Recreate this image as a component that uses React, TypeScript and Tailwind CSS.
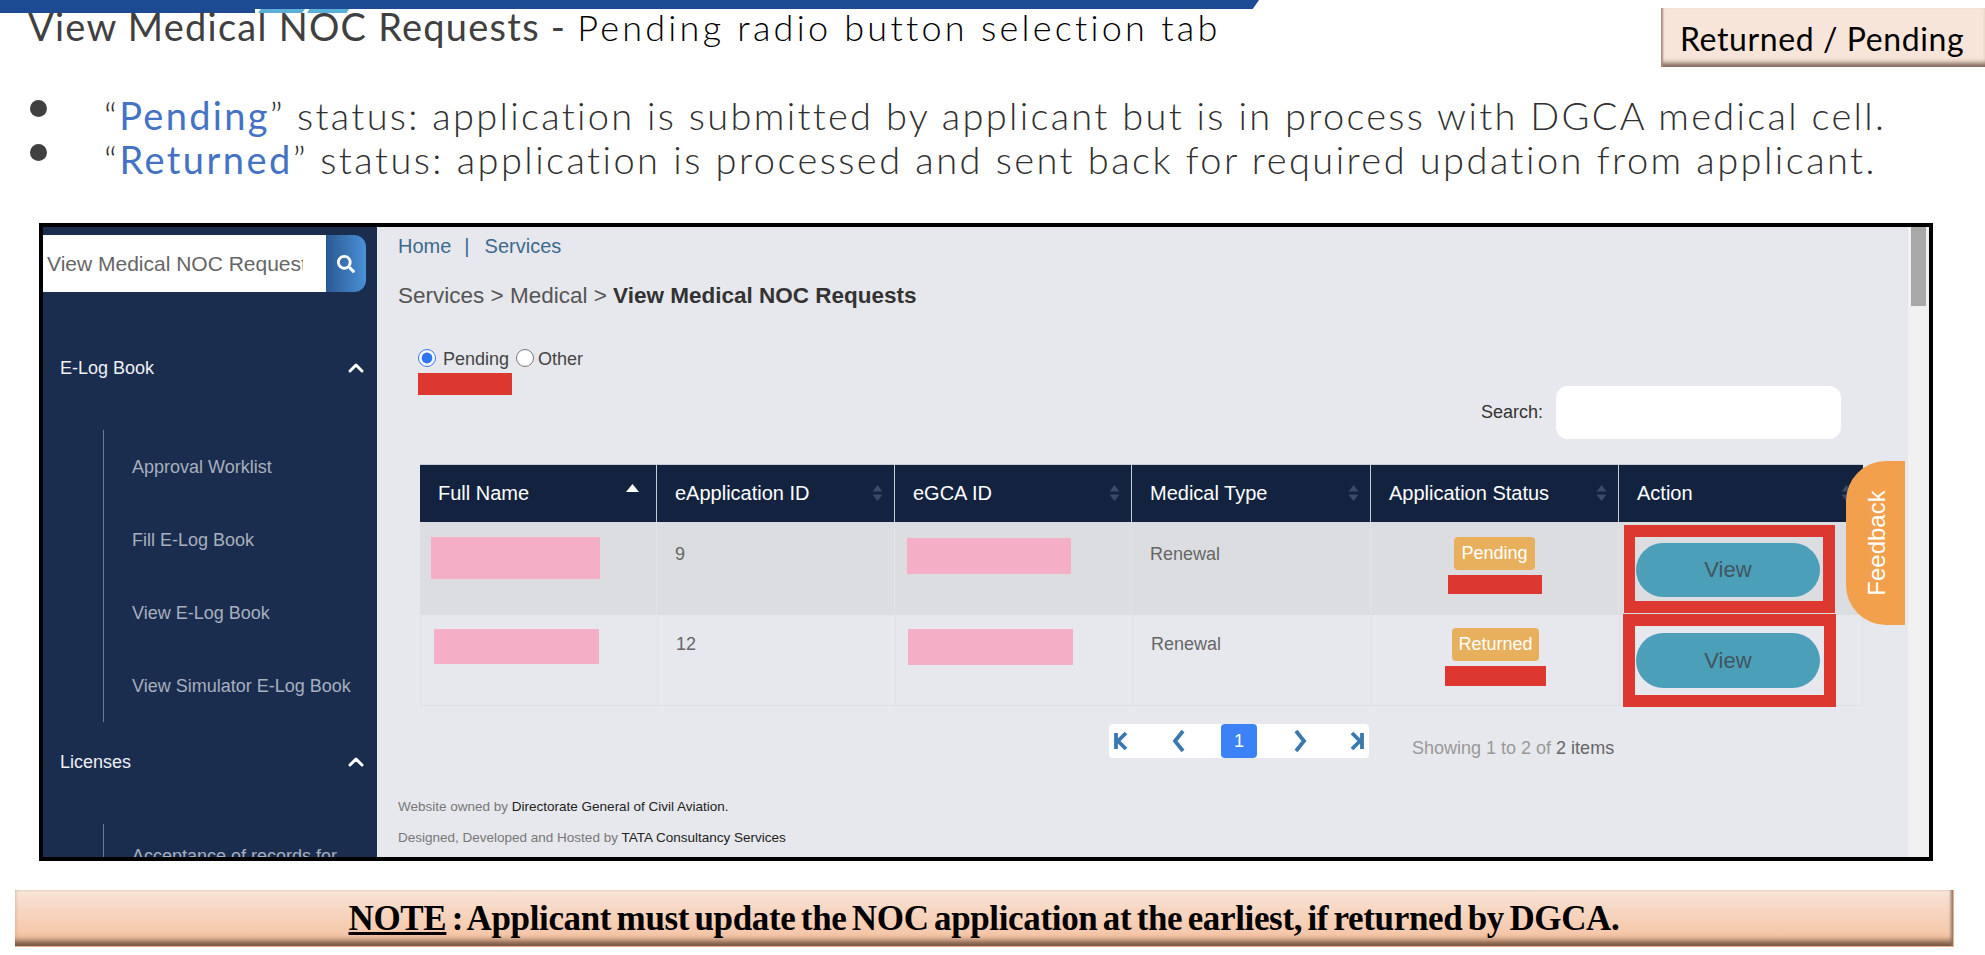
import { ChevronUp } from "lucide-react";
import { FaSearch } from "react-icons/fa";

const subItems = ["Approval Worklist", "Fill E-Log Book", "View E-Log Book", "View Simulator E-Log Book"];

function SortIcon() {
  return (
    <svg width="11" height="18" viewBox="0 0 11 18" className="shrink-0">
      <path d="M5.5 1 L10.5 7.5 H0.5 Z M5.5 17 L10.5 10.5 H0.5 Z" fill="#3b4a66" />
    </svg>
  );
}

function HeaderCell({ label, active, last }: { label: string; active?: boolean; last?: boolean }) {
  return (
    <div className={`flex items-center justify-between pl-[18px] pr-[11px] pb-[2px] text-[20px] text-white ${last ? "" : "border-r border-[#c8ccd4]"}`}>
      <span>{label}</span>
      {active ? (
        <svg width="13" height="8" viewBox="0 0 13 8" className="mb-[10px] mr-[6px]">
          <path d="M6.5 0 L13 8 H0 Z" fill="#ffffff" />
        </svg>
      ) : (
        <SortIcon />
      )}
    </div>
  );
}

function PageArrow({ d }: { d: string }) {
  return (
    <svg width="18" height="24" viewBox="0 0 18 24">
      <path d={d} fill="none" stroke="#3a78b0" strokeWidth="3.8" />
    </svg>
  );
}

export default function App() {
  return (
    <div className="flex h-[955px] w-[1985px] flex-col overflow-hidden bg-white font-['Liberation_Sans',Arial,sans-serif]">
      {/* slide top band */}
      <div className="h-[9px] w-[1259px] shrink-0 bg-[#1c4a93] [clip-path:polygon(0_0,100%_0,99.5%_100%,0_100%)]" />
      <div className="flex h-[4px] shrink-0">
        <div className="h-full w-[255px] bg-[#1c4a93]" />
        <div className="ml-[3px] h-full w-[47px] bg-[#5bb0d8] [clip-path:polygon(6%_0,100%_0,94%_100%,0_100%)]" />
        <div className="ml-[2px] h-full w-[42px] bg-[#5bb0d8] [clip-path:polygon(6%_0,100%_0,94%_100%,0_100%)]" />
      </div>

      {/* slide title */}
      <div className="-mt-[5px] flex h-[59px] shrink-0 items-start justify-between font-['Lato',sans-serif]">
        <div className="mt-[-7px] ml-[28px] leading-[50px] whitespace-nowrap">
          <span className="text-[38px] font-normal tracking-[1.25px] text-[#404040]">View Medical NOC Requests - </span>
          <span className="text-[36px] font-light tracking-[3.25px] text-black">Pending radio button selection tab</span>
        </div>
        <div className="ml-auto flex h-[59px] w-[324px] items-center bg-[#f7e5d9] pt-[3px] pl-[19px] text-[32px] font-normal tracking-[0.6px] whitespace-nowrap text-black shadow-[inset_3px_0_2px_-1px_#a89080,inset_0_-7px_5px_-3px_#7d6555]">
          Returned / Pending
        </div>
      </div>

      {/* bullets */}
      <div className="mt-[26px] flex shrink-0 flex-col font-['Lato',sans-serif] text-[38px] leading-[44px] font-light text-[#303030]">
        <div className="flex h-[44px] items-center tracking-[2.3px] whitespace-nowrap">
          <div className="ml-[30px] h-[17px] w-[17px] -translate-y-[7px] rounded-full bg-[#404040]" />
          <div className="ml-[57px]">
            “<span className="font-normal text-[#4472c4]">Pending</span>” status: application is submitted by applicant but is in process with DGCA medical cell.
          </div>
        </div>
        <div className="flex h-[44px] items-center tracking-[2.45px] whitespace-nowrap">
          <div className="ml-[30px] h-[17px] w-[17px] -translate-y-[7px] rounded-full bg-[#404040]" />
          <div className="ml-[57px]">
            “<span className="font-normal text-[#4472c4]">Returned</span>” status: application is processed and sent back for required updation from applicant.
          </div>
        </div>
      </div>

      {/* embedded screenshot */}
      <div className="mt-[42px] ml-[39px] flex h-[638px] w-[1894px] shrink-0 overflow-hidden border-4 border-black bg-[#e7e8ed]">
        {/* sidebar */}
        <aside className="h-full w-[334px] shrink-0 overflow-hidden bg-[#1a2d4f] pt-[8px]">
          <div className="flex h-[57px] w-[323px]">
            <input
              readOnly
              value="View Medical NOC Requests"
              className="h-full w-[283px] bg-white pr-[23px] pl-[4px] text-[21px] text-[#666] outline-none"
            />
            <div className="flex h-full w-[40px] items-center justify-center rounded-r-[12px] bg-gradient-to-r from-[#2a5a92] to-[#4a90d6]">
              <FaSearch className="text-[18px] text-white" />
            </div>
          </div>

          <div className="mt-[61px] flex h-[30px] items-center justify-between pr-[9px] pl-[17px] text-[18px] text-[#eef0f4]">
            <span>E-Log Book</span>
            <ChevronUp size={24} strokeWidth={3} className="text-white" />
          </div>
          <div className="mt-[47px] ml-[60px] flex flex-col gap-[43px] border-l border-[#6a7a94] pt-[22px] pb-[21px] pl-[28px] text-[18px] leading-[30px] text-[#a8afbd]">
            {subItems.map((item) => (
              <div key={item}>{item}</div>
            ))}
          </div>

          <div className="mt-[25px] flex h-[30px] items-center justify-between pr-[9px] pl-[17px] text-[18px] text-[#eef0f4]">
            <span>Licenses</span>
            <ChevronUp size={24} strokeWidth={3} className="text-white" />
          </div>
          <div className="mt-[47px] ml-[60px] h-[60px] border-l border-[#6a7a94] pt-[17px] pl-[28px] text-[18px] leading-[30px] text-[#a8afbd]">
            Acceptance of records for
          </div>
        </aside>

        {/* main */}
        <main className="relative h-full w-[1531px] shrink-0 pl-[21px]">
          <div className="flex h-[38px] items-center text-[20px] text-[#3c6a8c]">
            <span>Home</span>
            <span className="ml-[13px]">|</span>
            <span className="ml-[15px]">Services</span>
          </div>
          <div className="mt-[16px] h-[30px] text-[22.5px] leading-[30px] text-[#555]">
            Services &gt; Medical &gt; <span className="font-bold text-[#333]">View Medical NOC Requests</span>
          </div>

          <div className="mt-[35px] ml-[20px] flex h-[24px] items-center text-[18px] text-[#444]">
            <input type="radio" readOnly checked className="h-[18px] w-[18px] accent-[#2f74f0]" />
            <span className="ml-[7px] pt-[3px]">Pending</span>
            <input type="radio" readOnly checked={false} className="ml-[7px] h-[18px] w-[18px]" />
            <span className="ml-[4px] pt-[3px]">Other</span>
          </div>
          <div className="mt-[3px] ml-[20px] h-[22px] w-[94px] bg-[#dc3830]" />

          <div className="-mt-[9px] flex h-[53px] items-center">
            <span className="ml-[1083px] text-[18px] text-[#333]">Search:</span>
            <div className="ml-[13px] h-full w-[285px] rounded-[12px] bg-white" />
          </div>

          {/* table */}
          <div className="mt-[25px] ml-[22px] w-[1443px]">
            <div className="grid h-[58px] grid-cols-[237px_238px_237px_239px_248px_244px] border-t border-[#c8ccd4] bg-[#13233f]">
              <HeaderCell label="Full Name" active />
              <HeaderCell label="eApplication ID" />
              <HeaderCell label="eGCA ID" />
              <HeaderCell label="Medical Type" />
              <HeaderCell label="Application Status" />
              <HeaderCell label="Action" last />
            </div>

            <div className="grid h-[93px] grid-cols-[237px_238px_237px_239px_248px_244px] bg-[#dcdde1] text-[18px] text-[#666]">
              <div className="border-r border-[#e2e3e8] pt-[15px] pl-[11px]">
                <div className="h-[42px] w-[169px] bg-[#f4aec6]" />
              </div>
              <div className="border-r border-[#e2e3e8] pt-[19px] pl-[18px]">9</div>
              <div className="border-r border-[#e2e3e8] pt-[16px] pl-[12px]">
                <div className="h-[36px] w-[164px] bg-[#f4aec6]" />
              </div>
              <div className="border-r border-[#e2e3e8] pt-[19px] pl-[18px]">Renewal</div>
              <div className="flex flex-col items-center border-r border-[#e2e3e8] pt-[15px]">
                <div className="flex h-[33px] items-center rounded-[4px] bg-[#e8b05c] px-[7px] text-white">Pending</div>
                <div className="mt-[5px] h-[19px] w-[94px] bg-[#dc3830]" />
              </div>
              <div className="pt-[3px] pl-[5px]">
                <div className="h-[88px] w-[211px] border-y-[12px] border-r-[12px] border-l-[11px] border-[#dc3830] pt-[6px] pl-[1px]">
                  <div className="flex h-[54px] w-[184px] items-center justify-center rounded-full bg-[#4c9fb8] pb-[1px] text-[22px] text-[#3f5560]">View</div>
                </div>
              </div>
            </div>

            <div className="grid h-[91px] grid-cols-[237px_238px_237px_239px_248px_244px] border-x border-b border-[#dfe0e5] text-[18px] text-[#666]">
              <div className="border-r border-[#dfe0e5] pt-[14px] pl-[13px]">
                <div className="h-[35px] w-[165px] bg-[#f4aec6]" />
              </div>
              <div className="border-r border-[#dfe0e5] pt-[16px] pl-[18px]">12</div>
              <div className="border-r border-[#dfe0e5] pt-[14px] pl-[12px]">
                <div className="h-[36px] w-[165px] bg-[#f4aec6]" />
              </div>
              <div className="border-r border-[#dfe0e5] pt-[16px] pl-[18px]">Renewal</div>
              <div className="flex flex-col items-center border-r border-[#dfe0e5] pt-[13px]">
                <div className="flex h-[33px] items-center rounded-[4px] bg-[#e8b05c] px-[6px] text-white">Returned</div>
                <div className="mt-[5px] h-[20px] w-[101px] bg-[#dc3830]" />
              </div>
              <div className="-mt-[1px] pl-[3px]">
                <div className="h-[93px] w-[213px] border-y-[12px] border-r-[12px] border-l-[12px] border-[#dc3830] pt-[7px] pl-[1px]">
                  <div className="flex h-[55px] w-[184px] items-center justify-center rounded-full bg-[#4c9fb8] pb-[1px] text-[22px] text-[#3f5560]">View</div>
                </div>
              </div>
            </div>
          </div>

          {/* pagination */}
          <div className="mt-[18px] ml-[711px] flex h-[34px] items-center">
            <div className="flex h-full w-[260px] items-center rounded-[4px] bg-white">
              <div className="ml-[3px] flex w-[18px] justify-center">
                <PageArrow d="M4 4 V20 M14 4 L6 12 L14 20" />
              </div>
              <div className="ml-[39px] flex w-[18px] justify-center">
                <PageArrow d="M14 2 L6 12 L14 22" />
              </div>
              <div className="ml-[34px] flex h-full w-[36px] items-center justify-center rounded-[4px] bg-[#3b82f6] text-[18px] text-white">1</div>
              <div className="ml-[34px] flex w-[18px] justify-center">
                <PageArrow d="M5 2 L13 12 L5 22" />
              </div>
              <div className="ml-[39px] flex w-[18px] justify-center">
                <PageArrow d="M14 4 V20 M4 4 L12 12 L4 20" />
              </div>
            </div>
            <div className="ml-[43px] translate-y-[7px] text-[18px] text-[#999]">
              Showing 1 to 2 of <span className="text-[#666]">2 items</span>
            </div>
          </div>

          {/* footer */}
          <div className="mt-[39px] h-[20px] text-[13.5px] leading-[20px] text-[#777]">
            Website owned by <span className="text-[#222]">Directorate General of Civil Aviation.</span>
          </div>
          <div className="mt-[11px] h-[20px] text-[13.5px] leading-[20px] text-[#777]">
            Designed, Developed and Hosted by <span className="text-[#222]">TATA Consultancy Services</span>
          </div>

          {/* feedback tab */}
          <div className="absolute top-[234px] left-[1469px] flex h-[164px] w-[59px] items-center justify-center rounded-l-[40px] bg-[#f2a04c] pl-[3px]">
            <span className="-rotate-90 text-[24px] text-white">Feedback</span>
          </div>
        </main>

        {/* scrollbar */}
        <div className="h-full w-[21px] shrink-0 bg-[#f1f1f1] px-[3px]">
          <div className="h-[79px] w-full bg-[#a8a8a8]" />
        </div>
      </div>

      {/* note */}
      <div className="mt-[29px] ml-[15px] flex h-[57px] w-[1939px] shrink-0 items-center justify-center border-r border-b border-[#eeb08c] bg-gradient-to-b from-[#f8e4d8] to-[#f4bf9c] pt-[3px] font-['Liberation_Serif',serif] text-[35px] font-bold tracking-[-0.35px] whitespace-nowrap text-black shadow-[inset_-3px_0_3px_-1px_#8f7565,inset_0_-8px_6px_-3px_#6d4f3c] [word-spacing:-3px]">
        <span className="underline">NOTE</span>
        <span>&nbsp;: Applicant must update the NOC application at the earliest, if returned by DGCA.</span>
      </div>
    </div>
  );
}
